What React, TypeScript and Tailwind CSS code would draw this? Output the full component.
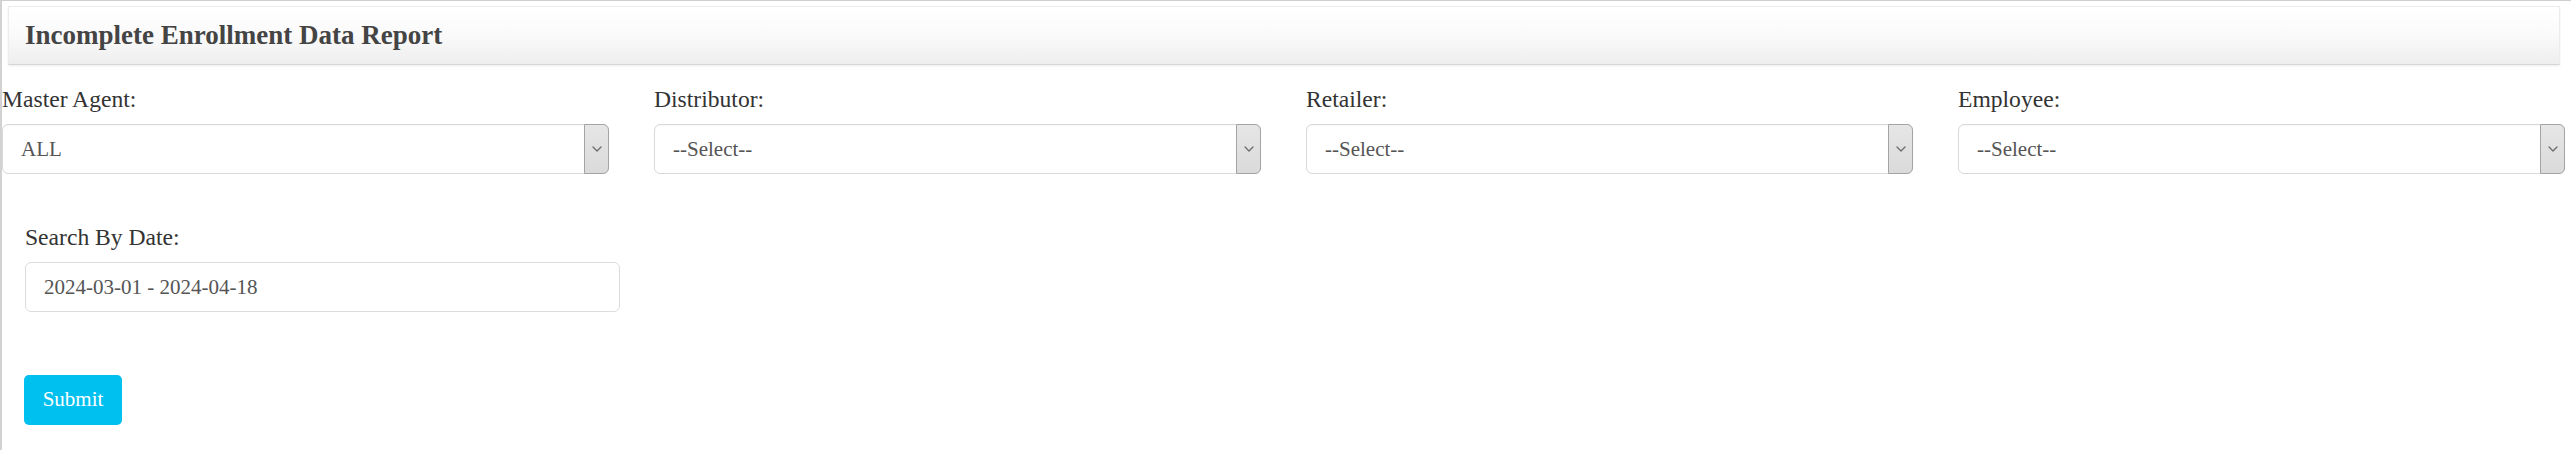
import React from "react";

function Chevron() {
  return (
    <svg width="10" height="6" viewBox="0 0 10 6" fill="none">
      <path d="M1 1 L5 5 L9 1" stroke="#6b6b6b" strokeWidth="1.3" strokeLinecap="round" strokeLinejoin="round" />
    </svg>
  );
}

function SelectBox({ label, value }: { label: string; value: string }) {
  return (
    <div className="w-[607px] shrink-0">
      <div className="text-[23.6px] leading-[25px] text-[#333]">{label}</div>
      <div className="mt-[12px] flex h-[50px] items-stretch rounded-[6px] border border-[#d9d9d9] bg-white shadow-[inset_0_1px_1px_rgba(0,0,0,0.03)]">
        <div className="flex flex-1 items-center pl-[18px] pt-px text-[21px] text-[#555]">{value}</div>
        <div className="-my-px -mr-px flex w-[25px] items-center justify-center rounded-r-[6px] border border-[#a4a4a4] bg-linear-to-b from-[#e6e6e6] to-[#dadada]">
          <Chevron />
        </div>
      </div>
    </div>
  );
}

export default function App() {
  return (
    <div className="h-[450px] w-[2571px] overflow-hidden border-t border-l-2 border-t-[#cfcfcf] border-l-[#d2d2d2] bg-white font-['Liberation_Serif',serif]">
      <div className="ml-[6px] mr-[11px] mt-[5px] border border-[#ececec] border-b-[#d6d6d6] bg-linear-to-b from-white via-[#fafafa] to-[#eeeeee] pl-[16px] pt-[13px] pb-[14px] shadow-[0_1px_2px_rgba(0,0,0,0.08)]">
        <div className="text-[27px] font-bold leading-[30px] text-[#444]">Incomplete Enrollment Data Report</div>
      </div>

      <div className="mt-[22px] flex gap-[45px]">
        <SelectBox label="Master Agent:" value="ALL" />
        <SelectBox label="Distributor:" value="--Select--" />
        <SelectBox label="Retailer:" value="--Select--" />
        <SelectBox label="Employee:" value="--Select--" />
      </div>

      <div className="mt-[51px] pl-[23px]">
        <div className="text-[23.6px] leading-[25px] text-[#333]">Search By Date:</div>
        <div className="mt-[12px] flex h-[50px] w-[595px] items-center rounded-[6px] border border-[#dcdcdc] bg-white pl-[18px] pt-px text-[21px] text-[#555]">
          2024-03-01 - 2024-04-18
        </div>
        <button className="-ml-px mt-[63px] flex h-[50px] w-[98px] items-center justify-center rounded-[5px] bg-[#00c0ef] text-[21px] text-white">
          Submit
        </button>
      </div>
    </div>
  );
}
